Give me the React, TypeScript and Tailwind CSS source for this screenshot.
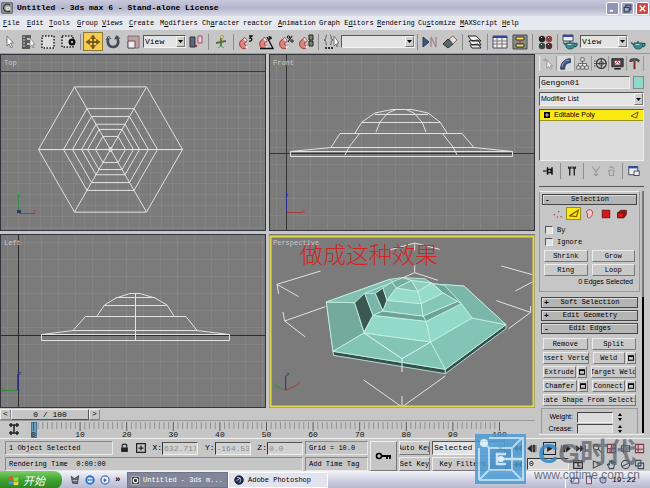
import React from "react";

type Kids = { children?: React.ReactNode };

const Sep = () => <span className="mx-[2px] h-4 w-px shrink-0 border-l border-[#8d8d8d]" />;

function Svg({ children, w = 16, h = 16, box = "0 0 16 16" }: Kids & { w?: number; h?: number; box?: string }) {
  return (
    <svg width={w} height={h} viewBox={box} fill="none" stroke="#333" strokeWidth="1" aria-hidden="true" className="shrink-0">
      {children}
    </svg>
  );
}

function Tool({ label, active, first, children }: Kids & { label: string; active?: boolean; first?: boolean }) {
  return (
    <button
      aria-label={label}
      className={
        "flex h-[19px] shrink-0 items-center justify-center " +
        (first ? "w-[18px] " : "w-5 ") +
        (active ? "border border-[#8a7a3a] bg-[#f7cb4d]" : "")
      }
    >
      <Svg>{children}</Svg>
    </button>
  );
}

function Dropdown({ label, value, className, textClass = "" }: { label: string; value: string; className: string; textClass?: string }) {
  return (
    <div className={"relative shrink-0 border border-[#f4f4f4] border-t-[#555] border-l-[#555] bg-[#e4e4e4] " + className}>
      <select aria-label={label} className={"block h-full w-full appearance-none bg-transparent px-px text-black outline-none " + textClass}>
        <option>{value}</option>
      </select>
      <span className="pointer-events-none absolute inset-y-0 right-0 flex w-[9px] items-center justify-center border border-[#f8f8f8] border-r-[#777] border-b-[#777] bg-[#cfcfcf]">
        <svg width="5" height="3" viewBox="0 0 5 3"><path d="M0 0h5L2.500 3z" fill="#000" /></svg>
      </span>
    </div>
  );
}

const Magnet = () => (
  <>
    <path d="M8 14C3 16 0 10 3 7L7 3.500M9.500 11.500C7 12 5.500 10.500 6.500 9L9 6.500" stroke="#b4453f" strokeWidth="1.300" />
    <path d="M8 14C3 16 0 10 3 7l4-3.500L9 6.500 6.500 9c-1 1.500 .5 3 3 2.500z" fill="#d98a84" stroke="#a8413c" strokeWidth=".8" />
    <path d="M6 4.500l2 2.500M8 14l1.500-2.500" stroke="#eee" strokeWidth="1.600" />
  </>
);

const Teapot = () => (
  <>
    <path d="M4 9c-1 5 2 6 4 6s6-1 4.500-6z" fill="#3f8a8c" stroke="#1d5a60" />
    <path d="M4 11L1 8.500M12.500 10c3-2 3.500 1 .5 3M8 9V7" stroke="#1d5a60" strokeWidth="1.400" />
    <path d="M5.500 10.500h4" stroke="#a7dcdc" />
  </>
);

function Toolbar() {
  return (
    <div className="flex h-6 items-center overflow-hidden border-b border-[#9a9a9a] bg-[#c6c6c6]">
      <Tool label="Select" first><path d="M6 2v10l2-2 2 4 1.500-1-2-4h3z" fill="#fff" stroke="#777" /></Tool>
      <Tool label="Select by name">
        <path d="M2 1h9v3H7v2h3v3H7v2h3v4H2z" fill="#5c5c5c" stroke="none" />
        <path d="M3 3h2M3 6h2M3 9h2M3 12h2" stroke="#ccc" />
        <path d="M10 4v9l2-2 1 3 1-.5-1-3h2z" fill="#fff" stroke="#777" strokeWidth=".7" />
      </Tool>
      <Tool label="Rectangular region"><path d="M2 2h12v12H2z" fill="#ddd" stroke="#222" strokeDasharray="1.500 1.500" strokeWidth="1.500" /></Tool>
      <Tool label="Window crossing">
        <path d="M2 2h11v11H2z" fill="#d5d5d5" stroke="#222" strokeDasharray="1.500 1.500" strokeWidth="1.500" />
        <circle cx="12" cy="8" r="3.500" fill="#111" stroke="none" /><circle cx="12" cy="8" r="1" fill="#eee" stroke="none" />
      </Tool>
      <Sep />
      <Tool label="Move" active>
        <path d="M8 2v12M2 8h12" stroke="#5a4512" strokeWidth="1.400" />
        <path d="M8 1l2.500 3.500h-5zM8 15l2.500-3.500h-5zM1 8l3.500-2.500v5zM15 8l-3.500-2.500v5z" fill="#7d632a" stroke="#5a4512" strokeWidth=".6" />
      </Tool>
      <Tool label="Rotate"><path d="M3.500 4C1.500 9 4 13 8 13s6.500-4 4.500-8" stroke="#454c55" strokeWidth="2.600" /><path d="M9 5.500L11.500 1l4 3.500z" fill="#454c55" stroke="none" /><path d="M1 6l2.500-4L6 5" stroke="#454c55" /></Tool>
      <Tool label="Scale"><path d="M3 2h11v12H3z" fill="#c99ba0" stroke="#777" /><path d="M3 7h7v7H3z" fill="#eee" stroke="#555" /></Tool>
      <Dropdown label="Reference coordinate system" value="View" className="h-[13px] w-[43px]" textClass="text-[8px]" />
      <Tool label="Use pivot center"><path d="M2 3h5v10H2z" fill="#5d657c" /><path d="M10 2h4v7h-4z" fill="#ead0dc" stroke="#9c4d6e" /><circle cx="8" cy="12" r="1.200" fill="#a33" stroke="none" /></Tool>
      <Sep />
      <Tool label="Manipulate"><path d="M8 4v8M3 9l10-2" stroke="#5c6b3a" strokeWidth="1.800" /><circle cx="9" cy="3" r="1.600" fill="#e5dd3b" stroke="#777" strokeWidth=".5" /><path d="M5 14l3-2 3 2" stroke="#4a6" /></Tool>
      <Sep />
      <Tool label="Snap toggle"><Magnet /><path d="M11 2h3l-2 2c3 0 2 4-1 3" stroke="#111" strokeWidth="1.300" /></Tool>
      <Tool label="Angle snap"><Magnet /><path d="M2 14.500h13L9 3" stroke="#111" strokeWidth="1.300" /><path d="M11 2l3 2-3 2z" fill="#111" /></Tool>
      <Tool label="Percent snap"><Magnet /><path d="M10 8l4-6" stroke="#111" strokeWidth="1.200" /><circle cx="10.500" cy="3" r="1.200" stroke="#111" /><circle cx="14" cy="7" r="1.200" stroke="#111" /></Tool>
      <Tool label="Spinner snap"><Magnet /><path d="M11 1h4v5h-4zM11 7h4v5h-4z" fill="#7b8272" stroke="#222" /></Tool>
      <Sep />
      <Tool label="Named selection sets"><path d="M4 1C2 1 4 6 1 6c3 0 1 5 3 5M7 1c2 0 0 5 3 5-3 0-1 5-3 5" stroke="#555" /><path d="M11 2v10l2-2 1 3 1-1-1-3h2z" fill="#fff" stroke="#777" /><path d="M2 14h8" stroke="#333" strokeDasharray="2 1" strokeWidth="2" /></Tool>
      <Dropdown label="Named selections" value="" className="h-[13px] w-[74px]" textClass="text-[8px]" />
      <Sep />
      <Tool label="Mirror"><path d="M1 3l6 5-6 5z" fill="#3d5878" stroke="#2b3d55" /><path d="M9 13V3l5 10V3" stroke="#a8828c" strokeWidth="1.300" /></Tool>
      <Tool label="Align"><path d="M1 10l5-5 5 5-5 4z" fill="#55676c" stroke="#333" /><path d="M7 5l4-3 4 4-4 4z" fill="#e4dfdf" stroke="#866" /></Tool>
      <Sep />
      <Tool label="Layers"><path d="M3 11l2 3h9l-3-4zM2 7l3 4h9l-3-5zM1 2h8l5 5H5z" fill="#f2f2f2" stroke="#222" /></Tool>
      <Sep />
      <Tool label="Curve editor"><path d="M1 2h14v12H1z" fill="#eee" stroke="#446" /><path d="M1 3h14" stroke="#33449a" strokeWidth="2" /><path d="M1 7h14M1 10h14M5 4v10M10 4v10" stroke="#777" /></Tool>
      <Tool label="Schematic view"><path d="M1 1h14v14H1z" fill="#8c8f88" stroke="#444" /><path d="M4 3h8v3H4z" fill="#f0df5a" stroke="#333" /><path d="M8 6v4M4 10h8" stroke="#c22" /><path d="M4 10h8v3H4z" fill="#f0df5a" stroke="#333" /></Tool>
      <Sep />
      <Tool label="Material editor">
        <g stroke="none"><circle cx="5" cy="5" r="3.200" fill="#222" /><circle cx="12" cy="5" r="3.200" fill="#8c4045" /><circle cx="5" cy="12" r="3.200" fill="#394a44" /><circle cx="12" cy="12" r="3.200" fill="#54282c" /><path d="M4 3h1v1H4zM11 3h1v1h-1zM4 10h1v1H4zM11 10h1v1h-1z" fill="#fff" /></g>
      </Tool>
      <Sep />
      <Tool label="Render scene"><path d="M1 1h10v6H1z" fill="#eee" stroke="#446" /><path d="M1 2h10" stroke="#2d4aa8" strokeWidth="2" /><Teapot /></Tool>
      <Dropdown label="Render type" value="View" className="h-[13px] w-12" textClass="text-[8px]" />
      <Tool label="Quick render"><Teapot /></Tool>
    </div>
  );
}

const menus = ["File", "Edit", "Tools", "Group", "Views", "Create", "Modifiers", "Character", "reactor", "Animation", "Graph Editors", "Rendering", "Customize", "MAXScript", "Help"];
const underline: Record<string, number> = { File: 0, Edit: 0, Tools: 0, Group: 0, Views: 0, Create: 0, Modifiers: 1, Character: 2, Animation: 0, "Graph Editors": 7, Rendering: 0, Customize: 2, MAXScript: 0, Help: 0 };

function MenuBar() {
  return (
    <nav className="grid h-[14px] grid-cols-[24px_22px_28px_25px_27px_31px_42px_41px_35px_41px_58px_41px_42px_42px_24px] items-center overflow-hidden bg-[#e6e8f0] pl-[3px] text-[7px]">
      {menus.map((m) => {
        const u = underline[m];
        return (
          <button key={m} className="text-left whitespace-nowrap">
            {u === undefined ? m : <>{m.slice(0, u)}<u>{m[u]}</u>{m.slice(u + 1)}</>}
          </button>
        );
      })}
    </nav>
  );
}

function TitleBar() {
  const btn = "flex h-[13px] w-[13px] items-center justify-center rounded-xs border border-white";
  return (
    <header className="flex h-4 items-center bg-linear-to-b from-[#c9c9dd] via-[#b4b4cc] to-[#d9d9e6] pr-px pl-px">
      <Svg w={12} h={12}><path d="M1 1h14v14H1z" fill="#999" stroke="#444" /><path d="M12 4C8 1 3 4 3.500 8.500S9 14 12 12" stroke="#333" strokeWidth="1.500" /><path d="M6 7h6v3H7V8h3" stroke="#eee" strokeWidth="1.200" /></Svg>
      <h1 className="ml-1 flex-1 text-[8px] font-bold whitespace-nowrap">Untitled - 3ds max 6 - Stand-alone License</h1>
      <div className="flex gap-[2px]">
        <button aria-label="Minimize" className={btn + " bg-[#8f93b5]"}><Svg w={9} h={9}><path d="M3 12h6" stroke="#fff" strokeWidth="3" /></Svg></button>
        <button aria-label="Restore" className={btn + " bg-[#a3a7c4]"}><Svg w={9} h={9}><path d="M5 6V2h9v8h-3M2 6h9v8H2z" stroke="#333a5c" strokeWidth="2" /></Svg></button>
        <button aria-label="Close" className={btn + " bg-[#cf4a42]"}><Svg w={9} h={9}><path d="M3 3l10 10M13 3L3 13" stroke="#fff" strokeWidth="2.500" /></Svg></button>
      </div>
    </header>
  );
}

/* ---------- viewports ---------- */

function View({ box, name, active, grid, children, id }: Kids & { box: [number, number, number, number]; name: string; active?: boolean; grid?: number; id: string }) {
  const [x, y, w, h] = box;
  return (
    <svg viewBox={box.join(" ")} className="block h-auto w-full bg-[#7b7b7b]" fill="none" role="img" aria-label={name + " viewport"}>
      {grid && (
        <>
          <defs>
            <pattern id={id} width={grid} height={grid} x={x + 7} y={y + 8} patternUnits="userSpaceOnUse">
              <path d={`M0 .5h${grid}M.5 0v${grid}`} stroke="#848484" strokeWidth="1" />
            </pattern>
          </defs>
          <rect x={x} y={y} width={w} height={h} fill={`url(#${id})`} />
        </>
      )}
      {children}
      <text x={x + 4} y={y + 11} fontSize="7" fill="#c9c9c9">{name}</text>
      {active ? (
        <rect x={x + 1.500} y={y + 2.500} width={w - 3} height={h - 4} stroke="#dfd94a" strokeWidth="2" />
      ) : (
        <rect x={x + 0.500} y={y + 0.500} width={w - 1} height={h - 1} stroke="#34343c" />
      )}
    </svg>
  );
}

const hex = (r: number) =>
  [[-1, 0], [-0.5, -0.87], [0.5, -0.87], [1, 0], [0.5, 0.87], [-0.5, 0.87]]
    .map(([a, b]) => `${110.500 + a * r},${149.500 + b * r}`)
    .join(" ");

const solid: [string, string][] = [
  ["175,210 365,142 400,137 510,157 588,162 714,278 532,412 195,358", "#7dbdb0"],
  ["195,358 532,412 532,425 197,370", "#34504a"],
  ["532,412 714,278 714,290 532,425", "#34504a"],
  ["175,210 260,212 288,303 195,358", "#74aa9e"],
  ["175,210 365,142 375,150 290,184 260,212", "#83c0b3"],
  ["260,212 290,184 315,250 288,300", "#3c5852"],
  ["290,184 322,184 345,237 315,250", "#79b5a8"],
  ["322,184 345,168 357,205 345,237", "#37514b"],
  ["345,168 372,150 385,168 357,205", "#7ab3a7"],
  ["195,358 288,303 488,330 532,412", "#82c5b7"],
  ["532,412 488,330 612,258 714,278", "#82c5b7"],
  ["510,157 588,162 714,278 612,258 580,215", "#7ab7aa"],
  ["510,157 530,160 580,215 568,208 525,183 495,155", "#6fa698"],
  ["288,303 315,250 475,268 488,330", "#93d9ca"],
  ["475,268 488,330 612,258 580,215", "#93d9ca"],
  ["315,250 345,237 465,252 475,268", "#6da396"],
  ["465,252 475,268 580,215 568,208", "#6da396"],
  ["345,237 357,205 460,215 465,252", "#84c6b8"],
  ["460,215 465,252 568,208 525,183", "#84c6b8"],
  ["357,205 385,168 450,178 460,215", "#96dccd"],
  ["450,178 460,215 525,183 490,153", "#96dccd"],
  ["385,168 430,145 450,178", "#80beb0"],
  ["450,178 430,145 490,153", "#8dcfc0"],
  ["372,150 405,137 430,145 385,168", "#75ad9f"],
  ["405,137 470,140 490,153 430,145", "#7fb9ac"],
];

function Viewports() {
  return (
    <div className="grid grid-cols-2 gap-[3px] bg-[#c6c6c6]">
      <View id="gTop" box={[0, 54, 266, 177]} name="Top" grid={11}>
        <path d="M0 71.500h266" stroke="#3a3a3a" />
        <g stroke="#e2e2e2">
          {[72, 47, 38, 29, 23, 15, 2].map((r) => <polygon key={r} points={hex(r)} />)}
          <path d="M38.500 149.500h144M74.500 87l72 125M146.500 87l-72 125" />
        </g>
        <path d="M18.500 194v18" stroke="#3a8a45" /><path d="M19 213.500h16" stroke="#a33c3c" /><path d="M17 210h4v3h-4z" fill="#223a6a" />
        <text x="17" y="197" fontSize="6" fill="#3a8a45">y</text><text x="33" y="213" fontSize="6" fill="#b03a3a">x</text>
      </View>
      <View id="gFront" box={[269, 54, 266, 177]} name="Front" grid={17}>
        <path d="M286.500 54v177M269 153.500h266" stroke="#333" />
        <g stroke="#e2e2e2">
          <path d="M290.500 151.500h222v5h-222zM290.500 151.500L331 147.500h143l38.500 4M331 147.500l9-14h122l12 14" />
          <path d="M355 133l7-11 13-9 17-3.500h20l16 3.500 12 9 7 11M362 122.500h78M375 114.500h53" />
          <path d="M360 133l-11 14-4 8M442 133l11 14 4 8M376 132l4-10 8-9 8-3.500M426 132l-4-10-8-9-8-3.500" />
        </g>
        <path d="M286.500 192v20" stroke="#252c8c" /><path d="M287 212.500h16" stroke="#a33c3c" />
        <text x="285" y="197" fontSize="6" fill="#252c8c">z</text><text x="302" y="213" fontSize="6" fill="#b03a3a">x</text>
      </View>
      <View id="gLeft" box={[0, 234, 266, 174]} name="Left" grid={17}>
        <path d="M18.500 234v174M0 335.500h266" stroke="#2c2c2c" />
        <g stroke="#e2e2e2">
          <path d="M41.500 334.500h188v6h-188zM42 334.500l31-4h124l32 4M73 330.500l12.500-14H186l11 14" />
          <path d="M97 316l7.500-11 11.500-7 14-4.500h10l15 4.500 12 7 7 11M104.500 305.500h62M116 297.500h39M135.500 293v47" />
        </g>
        <path d="M18 374v17" stroke="#252c8c" strokeWidth="1.500" /><path d="M3 390.500h15" stroke="#2f8a3a" />
        <text x="18" y="375" fontSize="6" fill="#252c8c">z</text><text x="1" y="391" fontSize="6" fill="#2f8a3a">y</text>
      </View>
      <View id="gPersp" box={[269, 234, 266, 174]} name="Perspective" active>
        <g transform="translate(268 232) scale(.33333)" strokeLinejoin="round" strokeWidth="3">
          <path stroke="#e2e2e2" d="M365 54L440 33L515 52M440 33V55M440 100V122M375 150L440 122L510 145M158 117L27 157L92 194M27 157L32 185M45 240L50 267L112 315M50 267L172 224M700 102L793 128M793 150L742 177M685 206L788 241L722 290M788 241V222M287 444L402 525L532 432M402 492V525" />
          {solid.map(([p, c]) => <polygon key={p} points={p} fill={c} stroke="#c8f0e6" strokeWidth="2.500" />)}
          <path stroke="#e6f4f0" d="M288 303L402 380L488 330M402 380V420" />
          <path stroke="#252c8c" d="M53 475V430" /><path stroke="#a33c3c" d="M53 475L90 458" /><path stroke="#3a8a45" d="M53 475L22 462" />
          <text x="54" y="432" fontSize="18" fill="#252c8c">z</text><text x="87" y="458" fontSize="18" fill="#b03a3a">x</text><text x="17" y="462" fontSize="18" fill="#3a8a45">y</text>
        </g>
        <text x="300" y="263" fontSize="23" fill="#d32424" className="font-['Noto_Sans_CJK_SC',sans-serif] font-light">做成这种效果</text>
      </View>
    </div>
  );
}

function TimeLine() {
  const x = (f: number) => 33.500 + f * 4.660;
  return (
    <>
      <div className="flex h-3 items-center bg-[#c6c6c6] text-[8px]">
        <button aria-label="Previous frame" className="flex h-[11px] w-[11px] items-center justify-center border border-[#eee] border-r-[#888] border-b-[#888]">&lt;</button>
        <button className="h-[11px] w-[78px] border border-[#eee] border-r-[#555] border-b-[#555] leading-[9px]">0 / 100</button>
        <button aria-label="Next frame" className="flex h-[11px] w-[11px] items-center justify-center border border-[#eee] border-r-[#888] border-b-[#888]">&gt;</button>
      </div>
      <svg viewBox="0 420 535 17" className="block h-auto w-full border-t border-[#999] bg-[#c6c6c6]" role="img" aria-label="Track bar">
        <path d="M9 424h10M9 432h10M11 422v4M17 422v4M14 424v8M11 430v4M17 430v4" stroke="#222" strokeWidth="1.500" />
        <rect x="31.500" y="421.500" width="5" height="15" fill="#6f9dba" stroke="#46789a" />
        {Array.from({ length: 101 }, (_, f) => (
          <path key={f} d={`M${x(f)} 421v${f % 10 === 0 ? 9 : 7}`} stroke={f % 10 === 0 ? "#444" : "#858585"} strokeWidth=".8" />
        ))}
        {Array.from({ length: 11 }, (_, i) => (
          <text key={i} x={x(i * 10)} y="436" fontSize="8" textAnchor="middle" fill="#111">{i * 10}</text>
        ))}
      </svg>
    </>
  );
}

/* ---------- command panel ---------- */

function Rollout({ sign, children }: Kids & { sign: string }) {
  return (
    <button className="flex h-[11px] w-full items-center border border-[#444] bg-[#b4b4b4] text-[8px] shadow-[inset_1px_1px_0_#ddd]">
      <span className="w-[9px] text-center font-bold">{sign}</span>
      <span className="flex-1 pr-2 text-center text-[7px]">{children}</span>
    </button>
  );
}

function Btn({ children, className = "" }: Kids & { className?: string }) {
  return (
    <button className={"flex h-3 min-w-0 flex-1 items-center justify-center overflow-hidden border border-[#ececec] border-r-[#777] border-b-[#777] bg-[#c9c9c9] text-[7px] whitespace-nowrap " + className}>
      <span className="shrink-0">{children}</span>
    </button>
  );
}

const SetBtn = ({ label }: { label: string }) => (
  <button aria-label={label + " settings"} className="flex h-3 w-[10px] shrink-0 items-center justify-center border border-[#ececec] border-r-[#777] border-b-[#777]">
    <Svg w={6} h={6}><path d="M1 2h14v12H1zM1 4h14" stroke="#000" strokeWidth="3" /></Svg>
  </button>
);

function Spin({ id, label }: { id: string; label: string }) {
  return (
    <div className="flex h-3 shrink-0 items-center justify-end gap-1 pr-[14px] font-['Liberation_Sans',sans-serif] text-[7px]">
      <label htmlFor={id}>{label}</label>
      <input id={id} className="h-[11px] w-[36px] border border-[#eee] border-t-[#444] border-l-[#444] bg-[#dcdcdc]" />
      <Svg w={6} h={10} box="0 0 6 10"><path d="M1 4l2-3 2 3zM1 6l2 3 2-3z" fill="#000" stroke="none" /></Svg>
    </div>
  );
}

function PanelTabs() {
  const tab = "flex h-[15px] flex-1 items-center justify-center border-r border-[#999]";
  return (
    <div className="flex border-l border-[#eee]">
      <button aria-label="Create" className={tab}><Svg w={13} h={13}><path d="M6 4v10l2.500-2 2 3 1.500-1-2-3h3z" fill="#eee" stroke="#888" /><path d="M4 1v5M1 3.500h6" stroke="#999" /></Svg></button>
      <button aria-label="Modify" className={tab + " bg-[#dadada]"}><Svg w={13} h={13}><path d="M2 15C2 7 7 2 14 2v5c-5 0-7 3-7 8z" fill="#3c5580" stroke="#1e2c4a" /><path d="M4 12c0-5 4-8 9-8" stroke="#9fb4dc" /></Svg></button>
      <button aria-label="Hierarchy" className={tab}><Svg w={13} h={13}><path d="M6 1h4v4H6zM1 11h4v4H1zM6 11h4v4H6zM11 11h4v4h-4zM8 5v6M3 11V8h10v3" fill="#eee" stroke="#555" /></Svg></button>
      <button aria-label="Motion" className={tab}><Svg w={13} h={13}><circle cx="9" cy="8" r="6" stroke="#333" strokeWidth="1.500" /><circle cx="9" cy="8" r="2.500" /><path d="M9 2v12M3 8h12M0 5h2M0 8h2M0 11h2" /></Svg></button>
      <button aria-label="Display" className={tab}><Svg w={13} h={13}><path d="M1 2h14v10H1z" fill="#445" stroke="#222" /><path d="M4 4h8v6H4z" fill="#f0dde0" /><path d="M5 9l3-4 3 4" stroke="#c22" /><path d="M4 14.500h8" stroke="#222" strokeWidth="2" /></Svg></button>
      <button aria-label="Utilities" className={tab}><Svg w={13} h={13}><path d="M2 5c0-3 4-3 6-3s4 0 6 2l-1 2-3-2H8L3 6z" fill="#555" stroke="#333" /><path d="M8 5v10" stroke="#8b2f2a" strokeWidth="2.500" /></Svg></button>
    </div>
  );
}

function CommandPanel() {
  return (
    <aside className="flex w-[115px] shrink-0 flex-col bg-[#c6c6c6] pt-[2px] pr-[6px] pl-1">
      <PanelTabs />
      <div className="mt-[5px] flex gap-[3px]">
        <input aria-label="Object name" defaultValue="Gengon01" className="h-[13px] min-w-0 flex-1 border border-[#eee] border-t-[#555] border-l-[#555] bg-[#dedede] px-px text-[8px]" />
        <button aria-label="Object color" className="h-[13px] w-[11px] border border-[#888] bg-[#8fd8c8]" />
      </div>
      <Dropdown label="Modifier List" value="Modifier List" className="mt-[3px] h-[14px] w-full" textClass="font-['Liberation_Sans',sans-serif] text-[7px]" />
      <div className="mt-[3px] h-[52px] border border-[#eee] border-t-[#555] border-l-[#555] bg-[#dcdcdc]">
        <div className="flex h-[11px] items-center border-b border-[#9b9120] bg-[#f9ea12] pr-1 pl-1 font-['Liberation_Sans',sans-serif] text-[7px]">
          <Svg w={6} h={6}><path d="M0 0h16v16H0z" fill="#000" stroke="none" /><path d="M3 8h10M8 3v10" stroke="#fff" strokeWidth="2" /></Svg>
          <span className="ml-1 flex-1">Editable Poly</span>
          <Svg w={9} h={8}><path d="M1 10L15 2l-3 12z" stroke="#6a5a00" strokeWidth="2" /></Svg>
        </div>
      </div>
      <div className="mt-[3px] flex h-[14px] items-center justify-between px-1">
        <button aria-label="Pin stack"><Svg w={12} h={12}><path d="M0 8h5" stroke="#111" strokeWidth="1.500" /><path d="M6 3v10M6 6h5v4H6M12 3v10" stroke="#111" strokeWidth="2" /></Svg></button>
        <Sep />
        <button aria-label="Show end result"><Svg w={12} h={12}><path d="M3.500 2v2h3V2M9.500 2v2h3V2M5 4v10M11 4v10" stroke="#222" strokeWidth="1.800" /></Svg></button>
        <Sep />
        <button aria-label="Make unique"><Svg w={12} h={12}><path d="M3 2l5 7 5-7M8 9v5M5 12l3 2 3-2" stroke="#999" strokeWidth="1.500" /></Svg></button>
        <button aria-label="Remove modifier"><Svg w={12} h={12}><path d="M5 7h7l-1 7H6zM6 4l3-2 3 3" stroke="#999" strokeWidth="1.500" /></Svg></button>
        <Sep />
        <button aria-label="Configure modifier sets"><Svg w={12} h={12}><path d="M1 2h12v11H1z" fill="#eee" stroke="#224" /><path d="M1 3h12" stroke="#2d4aa8" strokeWidth="3" /><path d="M8 8h7v6H8z" fill="#eee" stroke="#224" /></Svg></button>
      </div>
      <hr className="mt-2 border-t border-[#555]" />

      <div className="mt-1 border-r-2 border-[#777] pr-[2px] pb-[5px]">
        <section className="border border-[#999] border-t-[#eee] px-[2px] pt-[2px] pb-1">
          <Rollout sign="-">Selection</Rollout>
          <div className="mt-[2px] flex h-[13px] items-center justify-center gap-px">
            <button aria-label="Vertex" className="flex h-[13px] w-[15px] items-center justify-center"><Svg w={10} h={10}><path d="M1 8h2v2H1zM8 3h2v2H8zM12 11h2v2h-2zM6 12h2v2H6z" fill="#c33" stroke="none" /></Svg></button>
            <button aria-label="Edge" className="flex h-[13px] w-[15px] items-center justify-center border border-[#998d1a] bg-[#f9ea12]"><Svg w={10} h={10}><path d="M1 11L15 2l-3 10z" stroke="#8a5d00" strokeWidth="2" /></Svg></button>
            <button aria-label="Border" className="flex h-[13px] w-[15px] items-center justify-center"><Svg w={10} h={10}><path d="M4 2c4-2 9 0 8 5s-4 8-7 7 1-4-1-6-2-4 0-6z" fill="#ecc" stroke="#b33" strokeWidth="1.500" /></Svg></button>
            <button aria-label="Polygon" className="flex h-[13px] w-[15px] items-center justify-center"><Svg w={10} h={10}><path d="M2 2h12v12H2z" fill="#d81818" stroke="#711" strokeWidth="1.500" /></Svg></button>
            <button aria-label="Element" className="flex h-[13px] w-[15px] items-center justify-center"><Svg w={10} h={10}><path d="M1 6l5-4h9v7l-4 5H1z" fill="#9a1515" stroke="#4c0a0a" /><path d="M1 6h10v8H1z" fill="#d81818" stroke="#4c0a0a" /></Svg></button>
          </div>
          <div className="mt-1 flex flex-col pl-[3px] text-[7px] leading-3">
            <label className="flex items-center gap-1"><input type="checkbox" className="h-2 w-2 appearance-none border border-[#eee] border-t-[#555] border-l-[#555] bg-[#e0e0e0]" />By</label>
            <label className="flex items-center gap-1"><input type="checkbox" className="h-2 w-2 appearance-none border border-[#eee] border-t-[#555] border-l-[#555] bg-[#e0e0e0]" />Ignore</label>
          </div>
          <div className="mt-[2px] grid grid-cols-2 gap-x-1 gap-y-[2px] px-[2px]">
            <Btn>Shrink</Btn><Btn>Grow</Btn><Btn>Ring</Btn><Btn>Loop</Btn>
          </div>
          <p className="pt-px pr-1 text-right font-['Liberation_Sans',sans-serif] text-[7px] leading-[10px]">0 Edges Selected</p>
        </section>
      </div>
      <div className="flex flex-col gap-[2px] border-r-2 border-black pr-[4px] pl-[2px]">
        <Rollout sign="+">Soft Selection</Rollout>
        <Rollout sign="+">Edit Geometry</Rollout>
        <Rollout sign="-">Edit Edges</Rollout>
        <div className="flex flex-col gap-[2px] px-[2px] pt-[2px]">
          <div className="flex gap-1"><Btn>Remove</Btn><Btn>Split</Btn></div>
          <div className="flex gap-1"><Btn>Insert Vertex</Btn><div className="flex min-w-0 flex-1 gap-px"><Btn>Weld</Btn><SetBtn label="Weld" /></div></div>
          <div className="flex gap-1"><div className="flex min-w-0 flex-1 gap-px"><Btn>Extrude</Btn><SetBtn label="Extrude" /></div><Btn>Target Weld</Btn></div>
          <div className="flex gap-1"><div className="flex min-w-0 flex-1 gap-px"><Btn>Chamfer</Btn><SetBtn label="Chamfer" /></div><div className="flex min-w-0 flex-1 gap-px"><Btn>Connect</Btn><SetBtn label="Connect" /></div></div>
          <div className="flex"><Btn>Create Shape From Selection</Btn></div>
        </div>
        <div className="flex h-[25px] flex-col overflow-hidden border border-b-0 border-[#999] pt-[2px]">
          <Spin id="weight" label="Weight:" />
          <Spin id="crease" label="Crease:" />
        </div>
      </div>
      <div className="mt-px border-t border-[#eee]" />
    </aside>
  );
}

/* ---------- status and taskbar ---------- */

function Coord({ axis, value }: { axis: string; value: string }) {
  return (
    <label className="flex shrink-0 items-center text-[8px]">
      {axis}:
      <input defaultValue={value} className="h-[13px] w-[36px] border border-[#eee] border-t-[#555] border-l-[#333] bg-[#d2d2d2] px-px text-[8px] text-[#888]" />
    </label>
  );
}

const well = "flex h-[14px] items-center border border-[#e8e8e8] border-t-[#888] border-l-[#888] px-[3px] whitespace-nowrap";
const play = [
  "M1 3v10M3 8l5-4v8zM9 8l5-4v8z",
  "M1 8l6-5v10zM9 3v10h2V3zM13 3v10",
  "M5 4l7 4-7 4z",
  "M15 8L9 3v10zM7 3v10H5V3zM2 3v10",
  "M15 3v10M13 8L8 4v8zM7 8L2 4v8z",
];
const navs = [
  "M6 2a4 4 0 100 8 4 4 0 000-8M9 9l5 5",
  "M2 2h12v12H2zM8 2v12M2 8h12",
  "M2 4h12v8H2zM5 1v14",
  "M2 2h12v12H2zM6 2v12M2 9h12",
  "M2 3l11 5-11 5z",
  "M5 14L2 8l2-1 1 2V3l2 0 1 4V2l2 1v4l2-3 1 1-2 9z",
  "M8 2a6 6 0 100 12A6 6 0 008 2M3 11l10-5",
  "M2 2h8v8H2zM6 6h8v8H6z",
];

function StatusBar() {
  return (
    <section className="relative flex h-[33px] gap-[2px] overflow-hidden border-t border-[#eee] bg-[#c6c6c6] pt-[2px] pl-[5px] text-[7px]">
      <div className="flex w-[298px] shrink-0 flex-col gap-[2px]">
        <div className="flex items-center justify-between">
          <div className={well + " w-[108px]"}>1 Object Selected</div>
          <button aria-label="Lock selection"><Svg w={9} h={10}><path d="M4 7V4c0-4 8-4 8 0v3" stroke="#222" strokeWidth="2" /><path d="M2 7h12v8H2z" fill="#222" stroke="none" /></Svg></button>
          <button aria-label="Absolute mode"><Svg w={10} h={10}><path d="M1 1h14v14H1zM8 4v8M4 8h8" stroke="#222" strokeWidth="2" /></Svg></button>
          <Coord axis="X" value="632.717" />
          <Coord axis="Y" value="-164.536" />
          <Coord axis="Z" value="0.0" />
        </div>
        <div className={well + " whitespace-pre"}>Rendering Time  0:00:00</div>
      </div>
      <div className="flex w-[63px] shrink-0 flex-col gap-[2px]">
        <div className={well}>Grid = 10.0</div>
        <div className={well}>Add Time Tag</div>
      </div>
      <button aria-label="Set keys" className="flex h-[30px] w-[27px] shrink-0 items-center justify-center border border-[#eee] border-r-[#777] border-b-[#777]">
        <Svg w={17} h={10} box="0 0 17 10"><circle cx="4" cy="5" r="2.500" stroke="#000" strokeWidth="1.600" /><path d="M6.500 5H16M12 5v3M15 5v3" stroke="#000" strokeWidth="1.800" /></Svg>
      </button>
      <div className="flex w-[31px] shrink-0 flex-col gap-[2px] overflow-hidden">
        <Btn className="min-h-[14px]">Auto Key</Btn>
        <Btn className="min-h-[14px]">Set Key</Btn>
      </div>
      <div className="flex w-[74px] shrink-0 flex-col gap-[2px]">
        <Dropdown label="Key mode" value="Selected" className="h-[14px] w-full" textClass="text-[8px]" />
        <Btn className="min-h-[14px]">Key Filters...</Btn>
      </div>
      <div className="flex w-[78px] shrink-0 flex-col gap-[3px] pt-px pl-1">
        <div className="flex justify-between">
          {play.map((d, i) => (
            <button key={d} aria-label={"Playback " + (i + 1)} className={i === 2 ? "border border-[#222]" : ""}><Svg w={11} h={11}><path d={d} fill="#222" stroke="#222" /></Svg></button>
          ))}
        </div>
        <div className="flex items-center gap-1">
          <button aria-label="Key mode toggle"><Svg w={11} h={11}><path d={play[0]} fill="#222" stroke="#222" /></Svg></button>
          <input aria-label="Current frame" defaultValue="0" className="h-3 w-[42px] border border-[#eee] border-t-[#333] border-l-[#333] bg-[#d8d8d8] px-px text-[8px]" />
          <button aria-label="Time configuration"><Svg w={10} h={11}><path d="M1 2h14v12H1zM1 5h14M8 6v4h4" strokeWidth="2" /></Svg></button>
        </div>
      </div>
      <div className="grid flex-1 grid-cols-4 justify-items-center gap-y-[2px] pr-1 pl-[2px]">
        {navs.map((d, i) => (
          <button key={d} aria-label={"Navigate " + (i + 1)}><Svg w={11} h={11}><path d={d} stroke={i === 1 || i === 3 ? "#8c3540" : "#3d4a5c"} strokeWidth="1.500" /></Svg></button>
        ))}
      </div>
    </section>
  );
}

function TaskBar() {
  return (
    <footer className="flex h-[18px] items-center overflow-hidden bg-linear-to-b from-[#f4f4fa] via-[#d0d1e2] to-[#b4b6cd] text-[7px]">
      <button className="flex h-[18px] w-[62px] shrink-0 items-center gap-1 rounded-r-lg bg-linear-to-b from-[#7ccf66] via-[#3da32f] to-[#2b8422] pl-2 font-['Noto_Sans_CJK_SC',sans-serif] text-[11px] leading-none text-white italic">
        <Svg w={11} h={11}><g stroke="none"><path d="M1 3c3-2 4-1 6 0v5C5 7 4 7 1 8z" fill="#e8542b" /><path d="M8 3c2 1 4 1 7 0v5c-3 1-5 1-7 0z" fill="#8fdb4a" /><path d="M1 9c3-1 4-1 6 0v5c-2-1-3-1-6 0z" fill="#4b8df0" /><path d="M8 9c2 1 4 1 7 0v5c-3 1-5 1-7 0z" fill="#f8cf3a" /></g></Svg>
        开始
      </button>
      <div className="flex w-[65px] shrink-0 items-center gap-[5px] pl-2">
        <button aria-label="3ds max"><Svg w={10} h={10}><path d="M2 2l5 4 7-5-2 13-8-1z" fill="#667" stroke="#222" /><path d="M4 9h8" stroke="#eee" /></Svg></button>
        <button aria-label="Browser"><Svg w={10} h={10}><circle cx="8" cy="8" r="6" fill="#dceefc" stroke="#2a74c8" strokeWidth="3" /><path d="M4 8h8" stroke="#2a74c8" strokeWidth="2" /></Svg></button>
        <button aria-label="Media player"><Svg w={10} h={10}><circle cx="8" cy="8" r="6.500" fill="#eef" stroke="#4a6fa8" strokeWidth="2" /><path d="M6 5l5 3-5 4z" fill="#2b62b8" stroke="none" /></Svg></button>
        <button aria-label="More" className="text-[9px] leading-none font-bold">»</button>
      </div>
      <button className="flex h-4 w-[101px] shrink-0 items-center gap-[3px] border border-[#6f7488] bg-[#818698] pl-[3px] text-white">
        <Svg w={9} h={9}><path d="M1 1h14v14H1z" fill="#333" stroke="#fff" /><circle cx="8" cy="8" r="4" stroke="#fff" strokeWidth="2" /></Svg>
        <span className="whitespace-nowrap">Untitled - 3ds m...</span>
      </button>
      <button className="flex h-4 w-[100px] shrink-0 items-center gap-1 border border-white bg-[#e2e3ef] px-[5px]">
        <Svg w={10} h={10}><circle cx="8" cy="8" r="7" fill="#1e2d50" stroke="#111" /><path d="M5 4c5-1 7 3 4 8M4 9l6-4" stroke="#cde" strokeWidth="1.500" /></Svg>
        <span className="whitespace-nowrap">Adobe Photoshop</span>
      </button>
      <div className="ml-auto flex h-full w-[85px] items-center gap-1 border-l border-[#fff] pl-1">
        <Svg w={10} h={10}><path d="M2 5h12v8H2z" fill="#dde" stroke="#446" strokeWidth="1.500" /></Svg>
        <Svg w={10} h={10}><path d="M4 2h8v12H4z" fill="#ece" stroke="#553" strokeWidth="1.500" /></Svg>
        <Svg w={10} h={10}><circle cx="8" cy="8" r="5" fill="#a9b4d6" stroke="#557" strokeWidth="1.500" /></Svg>
        <time className="text-[8px]">19:22</time>
      </div>
    </footer>
  );
}

function Watermark() {
  return (
    <div className="pointer-events-none absolute right-1 bottom-[5px] flex items-start gap-2">
      <svg width="51" height="50" viewBox="0 0 51 50" fill="none" className="shrink-0 opacity-85" role="img" aria-label="CG时代">
        <rect width="51" height="50" fill="#4a9ad4" />
        <path d="M4 46V14M14 4h34v42H4M12 12l6 6M47 4L37 14M47 46L37 36M4 46l10-10" stroke="#b5dbf3" strokeWidth="2" />
        <path d="M14 14h23v22H14z" fill="#3a8ccb" stroke="#b5dbf3" strokeWidth="2" />
        <path d="M31 20h-9v10h9M26 25h22" stroke="#cfe8f8" strokeWidth="2.500" />
        <circle cx="9" cy="9" r="4" fill="#dceffb" /><circle cx="26" cy="25" r="3" fill="#e8f5fd" />
      </svg>
      <div className="flex w-[112px] flex-col pt-[6px] font-['Liberation_Sans','Noto_Sans_CJK_SC',sans-serif]">
        <span className="pl-1 text-[28px] leading-7 font-bold whitespace-nowrap text-[#5e6570]/75"><span className="text-[#2f86c8]/85">C</span>G时代</span>
        <span className="text-[12px] leading-[14px] whitespace-nowrap text-[#555b68]/85">www.cgtime.com.cn</span>
      </div>
    </div>
  );
}

export default function App() {
  return (
    <div className="relative w-full overflow-hidden bg-[#c6c6c6] font-['Liberation_Mono','Noto_Sans_CJK_SC',monospace] text-black">
      <TitleBar />
      <MenuBar />
      <Toolbar />
      <main className="flex">
        <div className="min-w-0 flex-1">
          <Viewports />
          <TimeLine />
        </div>
        <CommandPanel />
      </main>
      <StatusBar />
      <TaskBar />
      <Watermark />
    </div>
  );
}
